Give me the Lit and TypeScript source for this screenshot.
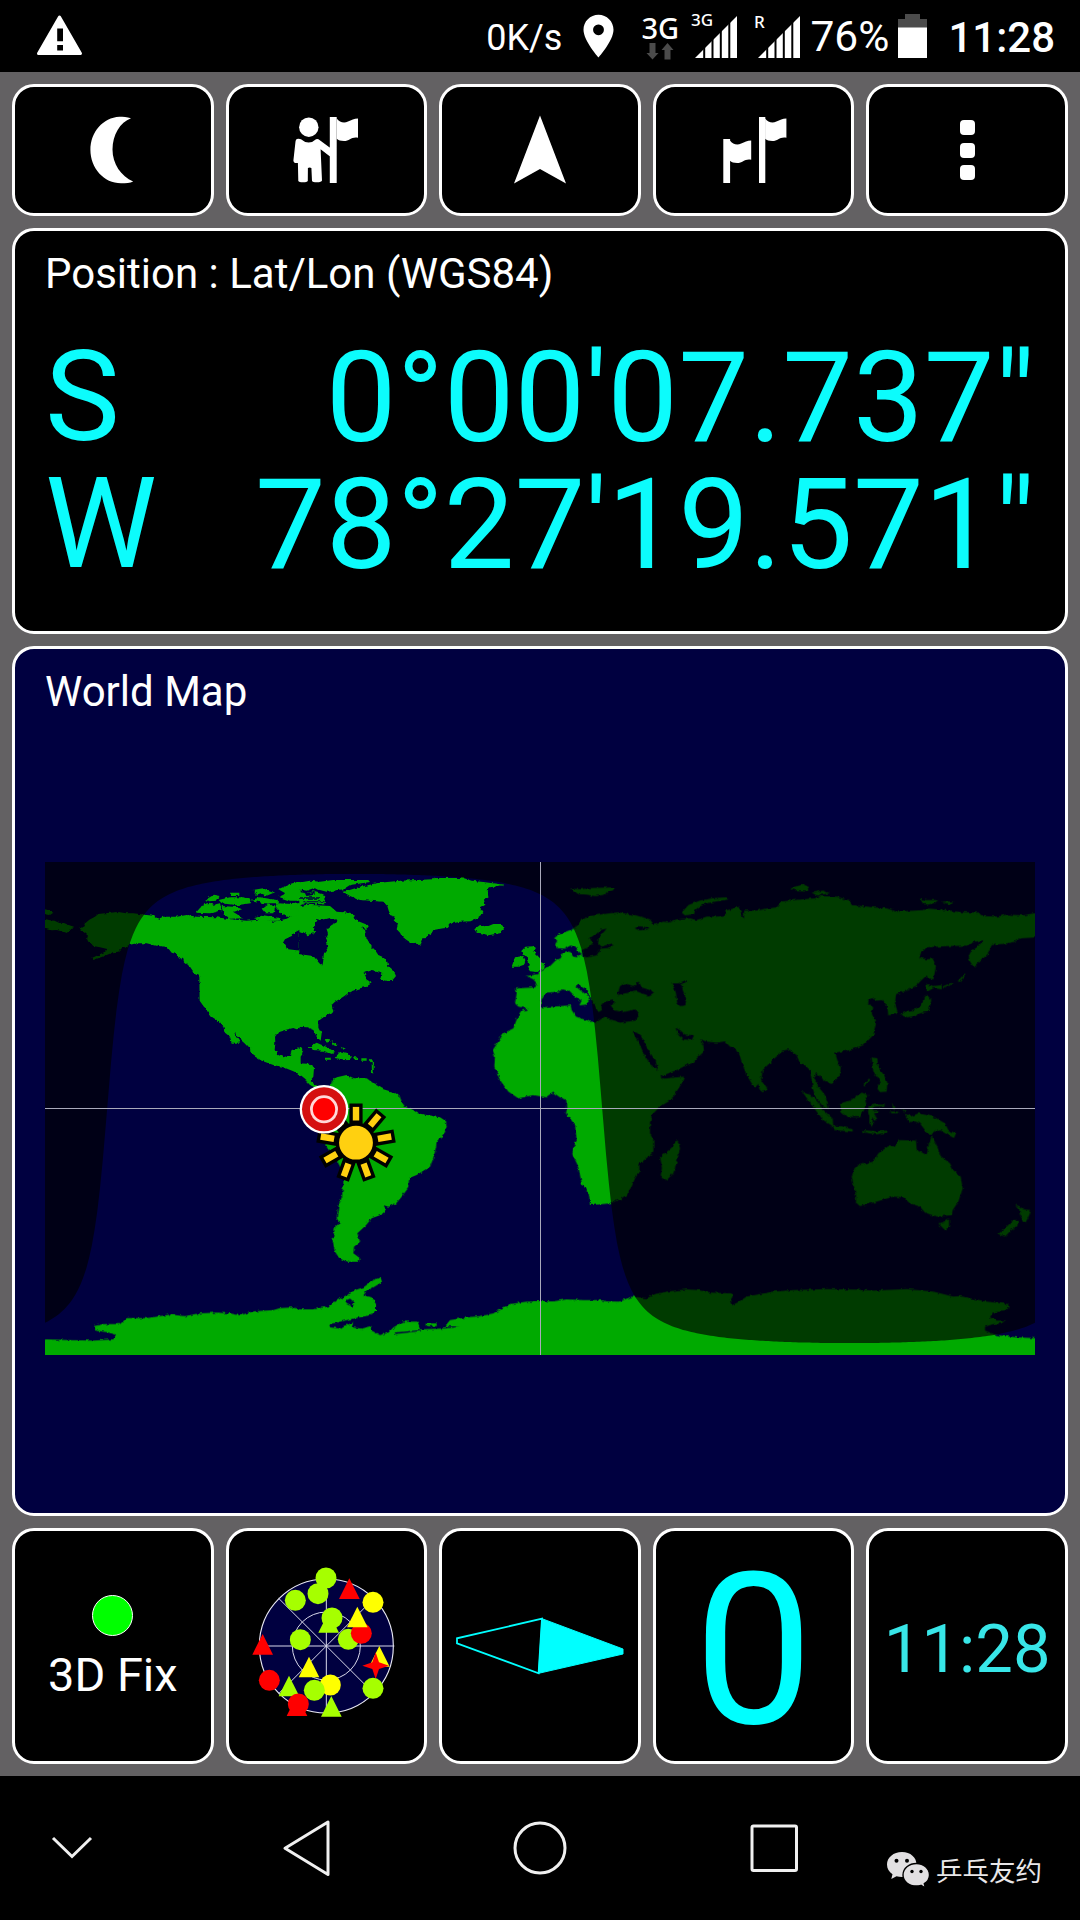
import { html, svg, LitElement, css } from 'lit';
import { customElement, property } from 'lit/decorators.js';

type Point = [number, number];

/** Map size in pixels, equirectangular. The strip below 89.5° south is cut off. */
const MAP_W = 990;
const MAP_H = 493;
const DEG = MAP_W / 360;
const EQUATOR = 246.5;

/** Coastlines, drawn at three units per pixel. Each region has its own origin. */
const REGIONS: { x: number; y: number; land: string[]; sea?: string[] }[] = [
  {
    // North America, west
    x: -1530, y: 0,
    land: [
      'M30,178 L45,178 56,181 70,188 60,195 45,192 30,192Z',
      'M30,207 L45,207 60,211 75,213 88,219 100,218 118,226 132,230 122,236 115,242 105,248 92,243 80,240 62,241 45,236 30,236Z',
      'M150,237 L165,228 163,222 178,209 195,200 205,192 225,190 265,186 288,190 310,190 350,195 370,197 385,206 400,200 440,200 470,195 500,200 560,202 600,208 650,212 700,208 730,215 770,206 790,195 812,190 812,236 795,245 785,258 765,268 758,280 770,284 775,298 812,302 812,535 800,538 790,534 765,540 745,546 735,560 736,580 734,600 745,615 760,622 780,615 785,600 812,593 812,674 790,664 760,652 730,645 695,632 672,618 662,608 660,595 645,578 625,560 612,545 618,560 630,578 605,578 600,560 585,548 578,528 560,510 545,500 525,475 509,452 508,380 495,372 480,350 462,335 458,322 448,326 440,312 425,308 412,292 405,290 380,287 350,280 320,280 300,284 275,295 265,305 250,307 230,315 205,325 190,330 186,324 205,315 225,305 235,298 210,292 190,288 182,280 168,270 175,258 160,245Z',
      'M495,188 L515,165 540,158 550,164 570,160 575,180 560,186 540,190Z',
      'M525,150 L552,134 572,138 556,152 538,154Z',
      'M566,150 L600,142 640,142 664,150 662,160 620,166 575,160Z',
      'M600,128 H628 V138 H603Z',
      'M575,168 L620,171 636,178 610,186 640,205 600,206 582,196Z',
      'M668,120 L700,115 735,127 710,137 692,130 680,134Z',
      'M664,150 L690,142 740,150 748,160 700,160Z',
      'M695,176 L716,160 735,172 730,190 706,190Z',
      'M740,160 L790,162 812,158 812,195 770,200 752,190 736,172Z',
      'M745,118 L780,102 800,96 812,96 812,152 780,152 745,140 766,130Z',
      'M672,205 L700,196 752,205 745,212 700,213Z',
    ],
  },
  {
    // North America east, Greenland, Caribbean
    x: -720, y: 0,
    land: [
      'M-5,170 L20,164 90,168 110,185 150,188 165,196 160,205 175,214 205,226 198,236 182,232 195,240 200,265 215,290 225,300 235,315 250,322 262,335 265,350 282,365 288,378 278,390 255,392 242,385 244,366 215,360 190,368 200,378 200,388 215,400 198,410 180,415 150,425 130,440 118,448 105,455 95,465 100,485 80,495 62,508 55,515 55,530 65,550 62,572 50,560 40,540 20,532 -5,530Z',
      'M-5,98 L30,92 60,95 100,90 205,90 210,96 150,105 130,118 100,122 80,125 40,115 20,122 -5,118Z',
      'M-5,126 L20,130 36,124 75,135 78,163 -5,160Z',
      'M130,126 L180,110 240,98 300,92 400,88 410,84 490,84 515,92 550,96 612,104 596,108 570,112 560,122 566,142 552,150 556,164 540,175 550,190 530,205 512,214 480,215 450,222 440,234 430,235 400,240 395,250 385,255 382,264 370,265 362,287 350,278 335,280 320,270 305,258 300,248 290,238 294,222 278,208 285,200 270,195 262,168 250,155 180,150 150,138Z',
      'M523,238 L540,225 560,230 580,222 605,222 612,238 600,250 565,256 545,250 530,248Z',
      'M664,303 L676,290 700,289 708,294 700,305 708,312 720,325 722,336 735,342 733,354 712,366 690,364 682,352 690,345 682,332 680,318 668,314Z',
      'M645,322 L670,318 676,330 672,344 655,350 635,350Z',
      'M-5,592 L10,598 6,615 -5,625Z',
      'M-5,640 L35,642 42,655 40,680 30,692 50,708 66,712 60,720 30,704 20,690 -5,670Z',
      'M25,592 L50,578 78,590 105,605 96,612 70,602 40,600Z',
      'M104,624 L118,604 140,608 156,620 150,627 125,628Z',
      'M78,566 L90,568 88,575 80,578Z M95,574 L112,580 110,590 98,586Z M122,590 L134,596 128,600Z',
      'M75,623 H93 V629 H75Z M160,622 H171 V628 H160Z M184,625 H200 V632 H184Z M204,628 L216,628 221,640 221,670 216,670 215,640Z',
    ],
    sea: [
      'M-5,245 L8,250 12,245 22,256 45,248 42,232 50,216 48,207 62,210 85,205 92,210 110,208 112,216 95,225 80,238 84,250 78,265 85,290 76,305 72,310 68,348 58,340 50,330 40,318 -5,312Z',
      'M0,142 H60 V146 H0Z M10,154 H74 V157 H10Z M14,130 L44,126 44,134 20,138Z',
    ],
  },
  {
    // Europe, Asia and Africa
    x: 0, y: 0,
    land: [
      'M90,115 L120,118 150,114 225,112 218,122 200,126 195,134 165,138 140,134 115,132Z',
      'M42,265 L50,258 70,248 90,240 105,236 120,212 150,198 190,192 235,187 285,195 330,208 342,225 370,215 385,218 410,208 450,205 470,210 500,200 530,200 558,195 556,182 580,176 595,170 604,190 612,210 612,182 650,182 680,176 710,172 725,155 760,150 825,145 835,138 890,140 930,152 935,165 1000,172 1040,175 1070,185 1150,180 1165,176 1220,180 1260,186 1318,188 1322,198 1370,200 1400,194 1450,196 1482,190 1490,190 1490,262 1440,265 1425,275 1400,280 1355,285 1345,310 1320,335 1302,352 1290,335 1286,318 1295,300 1318,285 1330,270 1300,276 1280,287 1220,288 1160,292 1142,310 1138,322 1160,328 1180,326 1188,350 1180,388 1164,385 1160,376 1140,395 1130,406 1100,422 1068,432 1065,460 1074,490 1045,496 1042,470 1034,460 1030,450 1010,452 1005,442 985,450 985,462 1000,472 995,490 1008,520 1000,555 970,585 930,600 885,608 895,640 902,652 900,675 875,702 850,690 840,675 828,670 822,685 835,710 855,735 862,755 866,778 850,770 828,745 818,715 815,690 810,660 795,645 780,640 770,615 745,598 730,602 700,628 668,660 662,695 645,712 635,700 620,675 610,650 600,620 585,595 570,590 555,574 530,578 500,575 480,568 490,585 492,605 470,625 460,638 440,645 410,660 385,670 360,680 372,686 432,680 425,700 400,740 385,755 360,770 335,795 330,820 330,850 340,870 340,905 325,920 298,942 298,965 285,985 275,1010 258,1035 240,1048 210,1060 150,1066 148,1040 138,1018 125,1000 115,950 97,912 100,895 110,870 105,825 90,805 78,790 82,770 78,748 60,742 40,728 20,742 -20,735 -65,745 -95,725 -120,690 -137,650 -135,620 -142,600 -125,575 -110,550 -80,535 -65,495 -55,480 -40,480 -35,476 -65,470 -75,460 -70,430 -72,415 -14,412 -10,400 -20,388 -40,378 -5,372 0,362 30,348 48,330 62,325 68,308 80,304 92,306 98,318 110,322 125,312 112,300 106,292 92,286 75,296 50,294 45,284 52,272Z',
      'M425,188 L445,165 480,152 520,144 560,142 565,148 530,154 500,160 478,170 465,180 462,193 435,196Z',
      'M750,115 L770,108 790,103 808,112 802,122 765,120Z M815,128 L850,122 870,130 830,136Z',
      'M655,700 L665,690 682,715 668,727 658,718Z',
      'M1140,145 L1155,150 1195,150 1185,158 1165,164 1150,162Z M1205,155 L1240,155 1230,164Z',
      'M995,622 L1012,625 1014,652 1032,675 1042,698 1040,725 1020,726 1012,716 1022,698 1012,680 1000,665Z',
      'M970,706 L988,684 990,690 974,710Z',
      'M1080,494 L1100,484 1125,478 1145,466 1150,448 1160,434 1174,450 1166,484 1140,490 1125,498 1100,502Z',
      'M1160,402 L1180,408 1205,405 1206,418 1180,414 1160,426Z',
      'M1210,408 L1236,398 1236,403 1212,412Z M1253,394 L1274,370 1277,374 1260,396Z',
    ],
    sea: [
      'M2,472 L5,448 20,428 55,425 68,418 90,424 105,440 125,452 118,466 138,464 150,448 146,438 122,422 106,408 114,402 138,418 154,446 166,470 175,486 186,480 184,466 205,452 218,448 224,456 212,465 222,480 250,486 286,478 298,495 285,512 240,518 225,512 205,508 195,500 172,515 150,515 108,500 95,480 92,466 40,470Z',
      'M232,435 L240,408 255,400 285,410 296,394 305,412 330,420 340,430 325,437 290,424 255,430Z',
      'M398,400 L415,400 438,390 438,396 424,404 428,420 440,448 436,466 420,468 412,460 408,430Z',
      'M125,300 L145,292 158,280 148,262 165,256 180,240 200,236 186,252 176,264 174,280 185,290 215,280 222,284 205,294 182,296 170,316 140,322 128,318Z',
      'M284,235 L296,228 320,232 325,238 298,241Z',
      'M278,546 L290,548 304,560 325,600 348,635 355,662 330,642 312,612 300,585Z',
      'M406,533 L422,542 435,554 462,556 455,570 430,568 416,556Z',
    ],
  },
  {
    // South America
    x: -780, y: 690,
    land: [
      'M132,40 L150,20 156,4 170,-8 200,-15 222,-5 260,-5 280,10 310,28 345,38 360,50 365,65 375,80 400,90 412,100 440,105 480,112 498,124 500,140 492,160 470,190 465,215 458,240 450,260 430,272 410,285 388,294 384,325 365,350 350,368 325,380 310,375 318,388 310,402 275,415 258,436 232,460 240,485 222,500 220,520 240,535 235,545 200,545 178,535 165,515 158,480 165,440 180,428 170,415 176,375 186,350 190,310 190,280 170,240 150,215 125,180 115,150 122,110Z',
      'M76,0 L88,-4 96,12 112,16 104,22 90,14Z',
    ],
  },
  {
    // Antarctica, west of the prime meridian
    x: -780, y: 690,
    land: [
      'M-720,780 L-700,778 -632,780 -560,782 -500,778 -492,764 -520,756 -552,752 -558,738 -530,732 -480,732 -460,714 -400,714 -330,704 -285,708 -240,700 -190,698 -150,700 -120,706 -80,694 -20,690 0,684 40,682 60,688 100,688 150,678 170,662 200,645 225,630 250,622 280,600 302,592 306,606 280,622 262,632 250,645 275,652 288,672 288,694 270,705 210,718 175,726 148,732 150,742 180,746 190,738 220,728 215,742 245,746 275,738 272,750 300,765 325,758 340,742 370,725 412,725 420,748 500,745 540,740 495,738 510,720 560,712 600,708 640,700 665,685 690,672 740,665 800,664 800,850 -720,850Z',
      'M440,730 H470 V738 H440Z M148,684 L162,664 168,668 156,688Z',
    ],
    sea: ['M196,662 L210,656 224,668 218,680 200,672Z M340,758 L420,750 420,753 345,762Z'],
  },
  {
    // Antarctica east, Australia, Indonesia
    x: 0, y: 690,
    land: [
      'M-20,664 L40,664 80,658 130,660 180,660 200,664 240,665 260,656 280,650 320,655 345,642 380,635 440,628 475,630 510,638 575,640 578,650 570,662 575,676 592,668 620,650 700,635 760,630 860,627 950,629 1000,632 1100,627 1180,635 1240,650 1260,648 1340,665 1405,672 1405,685 1390,694 1358,698 1350,712 1370,722 1395,722 1385,730 1360,732 1335,740 1335,752 1370,765 1430,772 1500,775 1500,850 -20,850Z',
      'M360,230 L385,212 400,198 408,180 416,190 420,205 412,240 400,280 380,300 362,290 366,262Z',
      'M786,34 L812,45 835,68 852,92 878,116 880,140 850,120 822,84Z',
      'M874,138 L900,138 938,148 938,155 885,150Z',
      'M900,70 L930,62 950,48 965,38 985,45 976,62 980,76 960,112 920,110 905,98Z',
      'M986,78 L1000,74 1034,74 1034,78 1004,80 998,92 1015,90 1016,96 1002,100 1012,118 1006,122 998,110 998,138 988,130 988,108 984,98Z',
      'M965,150 L1010,154 1042,152 1042,158 1010,163 975,158Z M1056,68 L1066,82 1060,90Z M1050,95 H1074 V100 H1050Z M1082,84 L1096,92 1096,98Z',
      'M1094,100 L1112,110 1135,100 1180,110 1215,130 1225,150 1248,160 1242,174 1220,162 1195,148 1170,166 1155,150 1140,130 1125,124 1110,126Z',
      'M935,290 L942,270 955,256 1000,245 1015,220 1045,198 1062,202 1080,180 1128,182 1130,208 1160,225 1166,195 1175,168 1190,195 1202,228 1230,250 1240,270 1262,290 1268,325 1255,365 1238,390 1235,405 1190,410 1155,398 1140,380 1110,370 1090,352 1060,350 1010,365 960,378 948,368 948,345Z',
      'M1195,430 L1212,425 1227,415 1227,440 1215,450Z',
      'M1425,373 L1440,380 1450,388 1473,390 1465,412 1455,430 1440,405 1438,388Z',
      'M1435,420 L1432,438 1412,452 1395,470 1375,462 1400,440 1420,420Z',
    ],
  },
];

/** Closed outline of the night side for a sub-solar point. */
function nightPath(sunLon: number, sunLat: number) {
  const rad = Math.PI / 180;
  const points: string[] = [];
  for (let lon = -180; lon <= 180; lon++) {
    const lat = Math.atan(-Math.cos((lon - sunLon) * rad) / Math.tan(sunLat * rad)) / rad;
    points.push(`${((lon + 180) * DEG).toFixed(1)},${(EQUATOR - lat * DEG).toFixed(1)}`);
  }
  return `M0,0 L${points.join(' ')} L${MAP_W},0Z`;
}

@customElement('world-map')
export class WorldMap extends LitElement {
  static styles = [css`
    :host {
      display: block;
      width: 990px;
      height: 493px;
    }

    svg {
      display: block;
    }

    .land { fill: #00aa00; }
    .sea { fill: #000040; }
    .night { fill: rgba(0, 0, 0, .65); }
    .axis { stroke: #a9a9bb; stroke-width: 1; }
    .sun { fill: #ffd010; stroke: #000; stroke-width: 3.4; }
  `];

  render() {
    return html`
      <svg width=${MAP_W} height=${MAP_H} viewBox="0 0 990 493">
        <defs>
          <filter id="coast" x="-5%" y="-5%" width="110%" height="110%" color-interpolation-filters="sRGB">
            <feTurbulence type="fractalNoise" baseFrequency=".25" numOctaves="2" seed="4"></feTurbulence>
            <feDisplacementMap in="SourceGraphic" scale="3.5" xChannelSelector="R" yChannelSelector="G"></feDisplacementMap>
          </filter>
        </defs>
        <g filter="url(#coast)">
          <g transform="translate(495 -12) scale(.33333)">
            ${REGIONS.map((r) => svg`
              <g transform="translate(${r.x} ${r.y})">
                ${r.land.map((d) => svg`<path class="land" d=${d}></path>`)}
                ${r.sea?.map((d) => svg`<path class="sea" d=${d}></path>`)}
              </g>
            `)}
          </g>
        </g>
        <path class="night" d=${nightPath(-67.4, -4.7)}></path>
        <path class="axis" d="M0,246.5 H990 M495.5,0 V493"></path>
        <g transform="translate(311 280.7)">
          ${[0, 1, 2, 3, 4, 5, 6, 7, 8].map((i) => svg`
            <rect class="sun" x="-4.9" y="-37.5" width="9.8" height="17" transform="rotate(${i * 40})"></rect>
          `)}
          <circle class="sun" r="18.6"></circle>
        </g>
        <g transform="translate(279 247.3)">
          <circle r="24.3" fill="#fff"></circle>
          <circle r="22" fill="#d51010"></circle>
          <circle r="12.6" fill="#ff0000" stroke="#ffd9d9" stroke-width="2.8"></circle>
        </g>
      </svg>
    `;
  }
}

interface Sat {
  shape: 'circle' | 'tri' | 'star';
  color: string;
  at: Point;
}

const LIME = '#a6ff00';
const YELLOW = '#ffff00';
const RED = '#ff0000';

/** Circles and stars are placed by their centre, triangles by their apex. */
const SATS: Sat[] = [
  { shape: 'circle', color: LIME, at: [-25, -157] },
  { shape: 'circle', color: LIME, at: [-1, -204] },
  { shape: 'circle', color: LIME, at: [-93, -137] },
  { shape: 'tri', color: RED, at: [69, -203] },
  { shape: 'circle', color: YELLOW, at: [140, -131] },
  { shape: 'tri', color: LIME, at: [7, -102] },
  { shape: 'circle', color: LIME, at: [17, -84] },
  { shape: 'circle', color: LIME, at: [66, -20] },
  { shape: 'circle', color: RED, at: [105, -38] },
  { shape: 'tri', color: YELLOW, at: [93, -118] },
  { shape: 'circle', color: LIME, at: [-78, -19] },
  { shape: 'tri', color: RED, at: [-191, -36] },
  { shape: 'circle', color: RED, at: [-171, 103] },
  { shape: 'tri', color: YELLOW, at: [-52, 32] },
  { shape: 'circle', color: YELLOW, at: [12, 117] },
  { shape: 'circle', color: LIME, at: [-36, 133] },
  { shape: 'tri', color: LIME, at: [-112, 89] },
  { shape: 'circle', color: RED, at: [-84, 174] },
  { shape: 'tri', color: RED, at: [-88, 148] },
  { shape: 'tri', color: LIME, at: [15, 150] },
  { shape: 'tri', color: YELLOW, at: [159, 0] },
  { shape: 'star', color: RED, at: [148, 59] },
  { shape: 'circle', color: LIME, at: [140, 127] },
];

@customElement('sky-view')
export class SkyView extends LitElement {
  static styles = [css`
    :host {
      display: block;
    }

    svg {
      display: block;
    }

    .disc { fill: #000040; stroke: #e8e8f4; stroke-width: 3.4; }
    .grid { fill: none; stroke: #d8d8ea; stroke-width: 3; }
  `];

  private _sat({ shape, color, at: [x, y] }: Sat) {
    const move = `translate(${x} ${y})`;
    if (shape === 'circle') return svg`<circle r="31.5" fill=${color} transform=${move}></circle>`;
    if (shape === 'tri') return svg`<path d="M0,0 L31,62 H-31Z" fill=${color} transform=${move}></path>`;
    return svg`<path d="M0,-40 L10,-10 40,0 10,10 0,40 -10,10 -40,0 -10,-10Z" fill=${color} transform=${move}></path>`;
  }

  render() {
    return html`
      <svg width="170" height="170" viewBox="-256 -255 510 510">
        <circle class="disc" r="201"></circle>
        <circle class="grid" r="102"></circle>
        <path class="grid" d="M-202,0 H204 M0,-202 V202 M-143,-143 L143,143 M-143,143 L143,-143"></path>
        ${SATS.map((sat) => this._sat(sat))}
      </svg>
    `;
  }
}

@customElement('signal-bars')
export class SignalBars extends LitElement {
  @property() label = '';
  @property({ type: Number }) baseline = 15;

  static styles = [css`
    :host {
      display: block;
    }

    svg {
      display: block;
    }

    text {
      font: 500 17px "Noto Sans", sans-serif;
      fill: #fff;
    }
  `];

  render() {
    return html`
      <svg width="46" height="66" viewBox="0 -8 46 66">
        <path d="M4,47 L46,5 V47Z" fill="#fff"></path>
        <path d="M13.2,0 V48 M21.5,0 V48 M29.8,0 V48 M38.3,0 V48" stroke="#000" stroke-width="2"></path>
        <text x="0" y=${this.baseline}>${this.label}</text>
      </svg>
    `;
  }
}

const flag = svg`<path d="M46.7,4.5 C49.5,8 53.5,9.5 58,7.6 C61.5,6.2 64,4.6 68,4.6 V23.8 C62,22.2 59.5,27 54,27 C50.5,27 48.5,26.3 46.7,24.8Z"></path>`;

@customElement('app-root')
export class AppRoot extends LitElement {
  static styles = [css`
    :host {
      display: grid;
      grid-template-rows: 72px 1704px 144px;
      width: 1080px;
      height: 1920px;
      overflow: hidden;
      background: #000;
      color: #fff;
      font-family: Roboto, sans-serif;
    }

    svg {
      display: block;
    }

    .status {
      display: flex;
      align-items: center;
      padding: 0 25px 0 36px;
      white-space: nowrap;
      line-height: 1;
    }

    .spacer { flex: 1; }

    .speed {
      font-size: 36px;
      padding-top: 4px;
      margin-right: 21px;
    }

    .network {
      width: 38px;
      margin: 0 12px 0 27px;
    }

    .network-name {
      font: 500 29px/29px "Noto Sans", sans-serif;
    }

    .percent {
      font-size: 42.5px;
      margin: 3px 9px 0 10px;
      width: 79px;
    }

    .clock {
      font-size: 42px;
      font-weight: 500;
      margin: 3px 0 0 20px;
    }

    .second { margin-left: 17px; }

    .screen {
      display: grid;
      grid-template-rows: 132px 406px 870px 236px;
      gap: 12px;
      padding: 12px;
      background: #636163;
    }

    .row {
      display: grid;
      grid-template-columns: repeat(5, 1fr);
      gap: 12px;
    }

    .card {
      box-sizing: border-box;
      min-width: 0;
      border: 3px solid #fff;
      border-radius: 22px;
      background: #000;
    }

    .cell {
      display: flex;
      flex-direction: column;
      align-items: center;
      justify-content: center;
      line-height: 1;
    }

    .title {
      font-size: 42px;
      line-height: 48px;
    }

    .position { padding: 19px 30px 0; }

    .coords {
      display: grid;
      grid-template-columns: auto 1fr;
      margin-top: 36px;
      font-size: 126px;
      line-height: 127px;
      color: #0cfcfc;
    }

    .value {
      padding-top: 1px;
      margin-bottom: -1px;
      text-align: right;
    }

    .map {
      padding: 19px 30px 0;
      background: #000040;
    }

    .map world-map { margin-top: 146px; }

    .more {
      display: grid;
      gap: 7.5px;
    }

    .more-dot {
      width: 15px;
      height: 15px;
      border-radius: 4px;
      background: #fff;
    }

    .fix-dot {
      box-sizing: border-box;
      width: 41px;
      height: 41px;
      border: 1.5px solid #fff;
      border-radius: 50%;
      background: #00ff00;
    }

    .fix-label {
      margin-top: 15px;
      font-size: 47px;
    }

    .speed-value {
      padding-top: 9px;
      font-size: 212px;
      color: #00ffff;
    }

    .time {
      padding-top: 7px;
      font-size: 67px;
      color: #38e6e8;
    }

    .nav {
      display: grid;
      grid-template-columns: 189px 234px 234px 234px 189px;
      align-items: center;
      justify-items: center;
    }

    .nav-hide {
      justify-self: start;
      margin-left: 51px;
    }

    .watermark {
      display: flex;
      align-items: center;
      gap: 6px;
      justify-self: start;
      margin: 44px 0 0 -5px;
      color: #e8e6e8;
      font: 26.5px/36px "Noto Sans CJK SC", sans-serif;
      white-space: nowrap;
    }
  `];

  private _status() {
    return html`
      <div class="status">
        <svg width="48" height="44" viewBox="0 0 48 44">
          <path d="M23.5,3 L44.5,39.5 H2.5Z" fill="#fff" stroke="#fff" stroke-width="3" stroke-linejoin="round"></path>
          <path d="M21.2,14.5 H27 V27.2 H21.2Z M21.2,31 H27 V36.5 H21.2Z" fill="#000"></path>
        </svg>
        <span class="spacer"></span>
        <span class="speed">0K/s</span>
        <svg width="31" height="44" viewBox="0 0 31 44">
          <path d="M15.5,.8 C7.2,.8 .5,7.5 .5,15.8 C.5,26.8 15.5,43.5 15.5,43.5 S30.5,26.8 30.5,15.8 C30.5,7.5 23.8,.8 15.5,.8Z M15.5,10.4 A5.4,5.4 0 1 1 15.49,10.4Z" fill="#fff" fill-rule="evenodd"></path>
        </svg>
        <div class="network">
          <div class="network-name">3G</div>
          <svg width="38" height="18" viewBox="0 0 38 18">
            <path d="M8.5,1 H14.5 V11 H17.5 L11.5,17.5 5.5,11 H8.5Z M23.5,17.5 V8 H20.5 L26.5,1 32.5,8 H29.5 V17.5Z" fill="#4b4b4b"></path>
          </svg>
        </div>
        <signal-bars label="3G" baseline="15"></signal-bars>
        <signal-bars class="second" label="R" baseline="17"></signal-bars>
        <span class="percent">76%</span>
        <svg width="30" height="46" viewBox="0 0 30 46">
          <path d="M0,15 V6 H7 V1 H22 V6 H29 V15Z" fill="#4b4b4b"></path>
          <rect y="14.5" width="29" height="30.5" fill="#fff"></rect>
        </svg>
        <span class="clock">11:28</span>
      </div>
    `;
  }

  private _toolbar() {
    return html`
      <div class="row">
        <div class="card cell">
          <svg width="72" height="72" viewBox="0 0 72 72" fill="#fff">
            <path d="M54,4.2 C50,2.9 46,2.7 42.5,2.7 C26,3.5 13.4,18 13.4,36 S27,69.3 44,69.3 C49,69.3 53,69 56.2,67.5 C44,62 35.5,50 35.5,35.5 C35.5,20.5 43,8.5 54,4.2Z"></path>
          </svg>
        </div>
        <div class="card cell">
          <svg width="72" height="72" viewBox="0 0 72 72" fill="#fff">
            <circle cx="18.8" cy="13.2" r="9.7"></circle>
            <path d="M6.8,25 Q9,24.3 11,25.2 Q18.8,32 26,25.2 Q28,24.3 29.5,26 L40,33.8 V42.6 L30.6,35.2 L32,66.5 Q31.5,68.3 27,68.3 T22,67 L21.4,54 Q19.6,52.8 17.9,54 L17.8,67 Q17,68.3 13,68.3 T8.3,67 L7.9,49 Q3.4,49.5 3.4,46.5 L5.5,27.5 Q5.7,25.5 6.8,25Z M39.8,3 H46.7 V69 H39.8Z"></path>
            ${flag}
          </svg>
        </div>
        <div class="card cell">
          <svg width="72" height="72" viewBox="0 0 72 72" fill="#fff">
            <path d="M36,1.5 L62,69.5 36,55 10,69.5Z"></path>
          </svg>
        </div>
        <div class="card cell">
          <svg width="72" height="72" viewBox="0 0 72 72" fill="#fff">
            <path d="M41,3 H47.3 V69 H41Z M5.3,25 H12.1 V69 H5.3Z"></path>
            <g transform="translate(.4 0)">${flag}</g>
            <g transform="translate(-34.8 22)">${flag}</g>
          </svg>
        </div>
        <div class="card cell">
          <div class="more">
            <div class="more-dot"></div>
            <div class="more-dot"></div>
            <div class="more-dot"></div>
          </div>
        </div>
      </div>
    `;
  }

  private _gauges() {
    return html`
      <div class="row">
        <div class="card cell">
          <div class="fix-dot"></div>
          <div class="fix-label">3D Fix</div>
        </div>
        <div class="card cell"><sky-view></sky-view></div>
        <div class="card cell">
          <svg width="172" height="60" viewBox="-86 -30 172 60" stroke="#00ffff">
            <path d="M2,-27.3 L-83,-7.7 V-2.7 L-1.4,27.3Z" fill="none" stroke-width="1.8"></path>
            <path d="M2,-27.3 L83,3 V8 L-1.4,27.3Z" fill="#00ffff"></path>
          </svg>
        </div>
        <div class="card cell"><span class="speed-value">0</span></div>
        <div class="card cell"><span class="time">11:28</span></div>
      </div>
    `;
  }

  private _nav() {
    return html`
      <div class="nav">
        <svg class="nav-hide" width="42" height="24" viewBox="0 0 42 24" fill="none" stroke="#f0f0f0" stroke-width="3">
          <path d="M2,2 L21,20.5 40,2"></path>
        </svg>
        <svg width="48" height="58" viewBox="0 0 48 58" fill="none" stroke="#f0f0f0" stroke-width="3" stroke-linejoin="round">
          <path d="M46,3 V55.5 L3,29.2Z"></path>
        </svg>
        <svg width="54" height="54" viewBox="0 0 54 54" fill="none" stroke="#f0f0f0" stroke-width="3">
          <circle cx="27" cy="27" r="25"></circle>
        </svg>
        <svg width="48" height="48" viewBox="0 0 48 48" fill="none" stroke="#f0f0f0" stroke-width="3">
          <rect x="2" y="2" width="44.5" height="44.5" rx="1.5"></rect>
        </svg>
        <div class="watermark">
          <svg width="44" height="38" viewBox="0 0 44 38">
            <path d="M16,1 C7.5,1 1,6.5 1,13.5 C1,17.5 3,21 6.5,23.3 L5.3,28 10.5,25.2 C12.2,25.7 14,26 16,26 C24.5,26 30.5,20.5 30.5,13.5 S24.5,1 16,1Z" fill="#e2e0e2"></path>
            <path d="M30.5,12.5 C23,12.5 17,17.5 17,24 S23,35 30.5,35 C32,35 33.5,34.8 35,34.3 L39.5,37 38.3,32.7 C41.5,30.7 43.5,27.5 43.5,24 C43.5,17.5 37.5,12.5 30.5,12.5Z" fill="#e2e0e2" stroke="#000" stroke-width="1.4"></path>
            <circle cx="10.5" cy="9.8" r="2" fill="#000"></circle>
            <circle cx="21" cy="9.8" r="2" fill="#000"></circle>
            <circle cx="26" cy="20.5" r="1.7" fill="#000"></circle>
            <circle cx="35" cy="20.5" r="1.7" fill="#000"></circle>
          </svg>
          <span>乒乓友约</span>
        </div>
      </div>
    `;
  }

  render() {
    return html`
      ${this._status()}
      <div class="screen">
        ${this._toolbar()}
        <div class="card position">
          <div class="title">Position : Lat/Lon (WGS84)</div>
          <div class="coords">
            <span>S</span><span class="value">0°00'07.737"</span>
            <span>W</span><span class="value">78°27'19.571"</span>
          </div>
        </div>
        <div class="card map">
          <div class="title">World Map</div>
          <world-map></world-map>
        </div>
        ${this._gauges()}
      </div>
      ${this._nav()}
    `;
  }
}

declare global {
  interface HTMLElementTagNameMap {
    'app-root': AppRoot,
    'world-map': WorldMap,
    'sky-view': SkyView,
    'signal-bars': SignalBars,
  }
}
